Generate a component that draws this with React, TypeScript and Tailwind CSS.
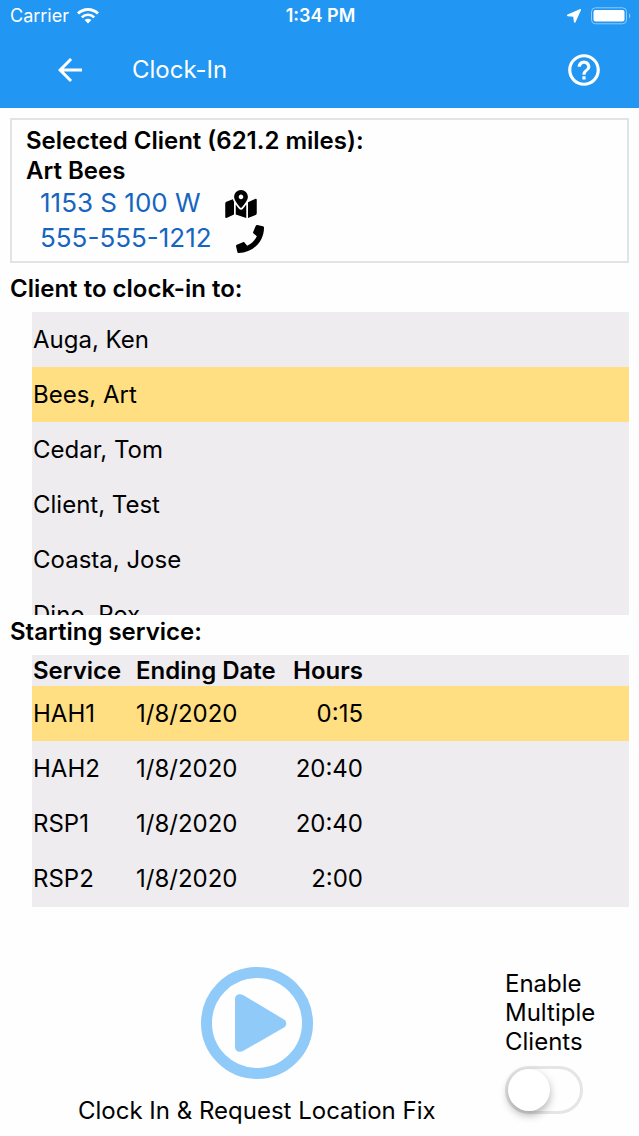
// Page: Clock-In
"use client";

import { useState } from "react";
import { FaMapMarkedAlt, FaPhone } from "react-icons/fa";
import { MdArrowBack, MdHelpOutline } from "react-icons/md";

const clients = ["Auga, Ken", "Bees, Art", "Cedar, Tom", "Client, Test", "Coasta, Jose", "Dino, Rex"];

const services = [
  { name: "HAH1", endingDate: "1/8/2020", hours: "0:15" },
  { name: "HAH2", endingDate: "1/8/2020", hours: "20:40" },
  { name: "RSP1", endingDate: "1/8/2020", hours: "20:40" },
  { name: "RSP2", endingDate: "1/8/2020", hours: "2:00" },
];

function StatusBar() {
  return (
    <div className="grid grid-cols-3 items-center h-8 pl-2.5 pr-2 text-lg">
      <div className="flex items-center gap-2">
        <span>Carrier</span>
        <svg className="w-[22px] h-4" viewBox="0 0 22 16" fill="none" stroke="currentColor">
          <path d="M1 5.6a14.2 14.2 0 0 1 20 0" strokeWidth="2.8" />
          <path d="M4.8 9.3a8.8 8.8 0 0 1 12.4 0" strokeWidth="2.6" />
          <path d="M11 15.6l-3.4-3.5a4.8 4.8 0 0 1 6.8 0z" fill="currentColor" stroke="none" />
        </svg>
      </div>
      <div className="text-center font-semibold">1:34 PM</div>
      <div className="flex items-center justify-end gap-2.5">
        <svg className="size-3.5" viewBox="0 0 14 14" fill="currentColor">
          <path d="M13.2.1.6 5.6c-.8.4-.7 1.5.2 1.6l5.4.6.7 5.3c.1.9 1.2 1 1.6.2L14 .9c.2-.6-.2-1-.8-.8z" />
        </svg>
        <svg className="w-10 h-[18px]" viewBox="0 0 40 18">
          <rect x="0.5" y="0.8" width="35" height="16" rx="4" fill="none" stroke="#90caf9" />
          <rect x="2.5" y="3" width="31" height="11.6" rx="2" fill="currentColor" />
          <path d="M38 6.2c1.6.8 1.6 4.4 0 5.2z" fill="#90caf9" />
        </svg>
      </div>
    </div>
  );
}

export default function ClockInPage() {
  const [client, setClient] = useState("Bees, Art");
  const [service, setService] = useState("HAH1");
  const [multiple, setMultiple] = useState(false);

  return (
    <div className="min-h-screen bg-[#fefefe] text-black text-2xl font-[Inter,sans-serif]">
      <header className="bg-[#2196f3] text-white">
        <StatusBar />
        <div className="flex items-center h-[76px] pl-[52px] pr-9">
          <button aria-label="Back">
            <MdArrowBack className="size-9" />
          </button>
          <h1 className="flex-1 pl-11">Clock-In</h1>
          <button aria-label="Help">
            <MdHelpOutline className="size-[38px]" />
          </button>
        </div>
      </header>

      <main className="px-2.5 pt-2.5">
        <section className="border-2 border-[#e3e2e5] px-3.5 pt-1.5 pb-[5px]">
          <h2 className="font-semibold leading-[30px]">
            Selected Client (621.2 miles):
            <br />
            Art Bees
          </h2>
          <div className="flex items-center gap-6 h-[35px] pl-3.5 text-[26px]">
            <a href="#map" className="text-[#1565c0]">1153 S 100 W</a>
            <FaMapMarkedAlt className="w-8 h-7" />
          </div>
          <div className="flex items-center gap-6 h-[35px] pl-3.5 text-[26px]">
            <a href="tel:555-555-1212" className="text-[#1565c0]">555-555-1212</a>
            <FaPhone className="size-7" />
          </div>
        </section>

        <h2 className="font-semibold leading-[30px] pt-[11px] pb-2">Client to clock-in to:</h2>
        <ul className="ml-[22px] h-[303px] overflow-hidden bg-[#eeecef]">
          {clients.map((name) => (
            <li key={name}>
              <button
                className={`block w-full h-[55px] pl-px text-left ${name === client ? "bg-[#ffdf82]" : ""}`}
                onClick={() => setClient(name)}
              >
                {name}
              </button>
            </li>
          ))}
        </ul>

        <h2 className="font-semibold leading-[30px] pt-0.5 pb-2">Starting service:</h2>
        <div className="ml-[22px] pb-px bg-[#eeecef]">
          <table className="w-full table-fixed">
            <colgroup>
              <col className="w-[104px]" />
              <col className="w-[157px]" />
              <col className="w-[70px]" />
              <col />
            </colgroup>
            <thead>
              <tr className="h-[31px] text-left leading-[30px]">
                <th className="p-0 pl-px font-semibold">Service</th>
                <th className="p-0 font-semibold">Ending Date</th>
                <th className="p-0 font-semibold">Hours</th>
                <td />
              </tr>
            </thead>
            <tbody>
              {services.map((s) => (
                <tr
                  key={s.name}
                  className={`h-[55px] ${s.name === service ? "bg-[#ffdf82]" : ""}`}
                  onClick={() => setService(s.name)}
                >
                  <td className="p-0 pl-px">{s.name}</td>
                  <td className="p-0">{s.endingDate}</td>
                  <td className="p-0 text-right">{s.hours}</td>
                  <td />
                </tr>
              ))}
            </tbody>
          </table>
        </div>

        <div className="flex items-start justify-between pt-[60px] pr-[34px] pl-[68px]">
          <button className="flex flex-col items-center gap-4">
            <svg className="size-28" viewBox="0 0 112 112" fill="#90caf9">
              <circle cx="56" cy="56" r="50.5" fill="none" stroke="#90caf9" strokeWidth="11" />
              <path d="M34 32c0-4 4-6 8-4l41 24.5c3 2 3 6 0 8l-41 23.5c-4 2-8 0-8-4z" />
            </svg>
            <span>Clock In &amp; Request Location Fix</span>
          </button>
          <label className="flex flex-col gap-2.5 w-[90px] pt-0.5 leading-[29px]">
            Enable Multiple Clients
            <input
              type="checkbox"
              checked={multiple}
              onChange={(e) => setMultiple(e.target.checked)}
              className="appearance-none w-[78px] h-12 rounded-full border-3 border-[#e5e4e7] checked:bg-[#90caf9] before:block before:size-[42px] before:rounded-full before:bg-white before:shadow-[0_4px_8px_rgba(0,0,0,0.3)] checked:before:ml-[30px]"
            />
          </label>
        </div>
      </main>
    </div>
  );
}
